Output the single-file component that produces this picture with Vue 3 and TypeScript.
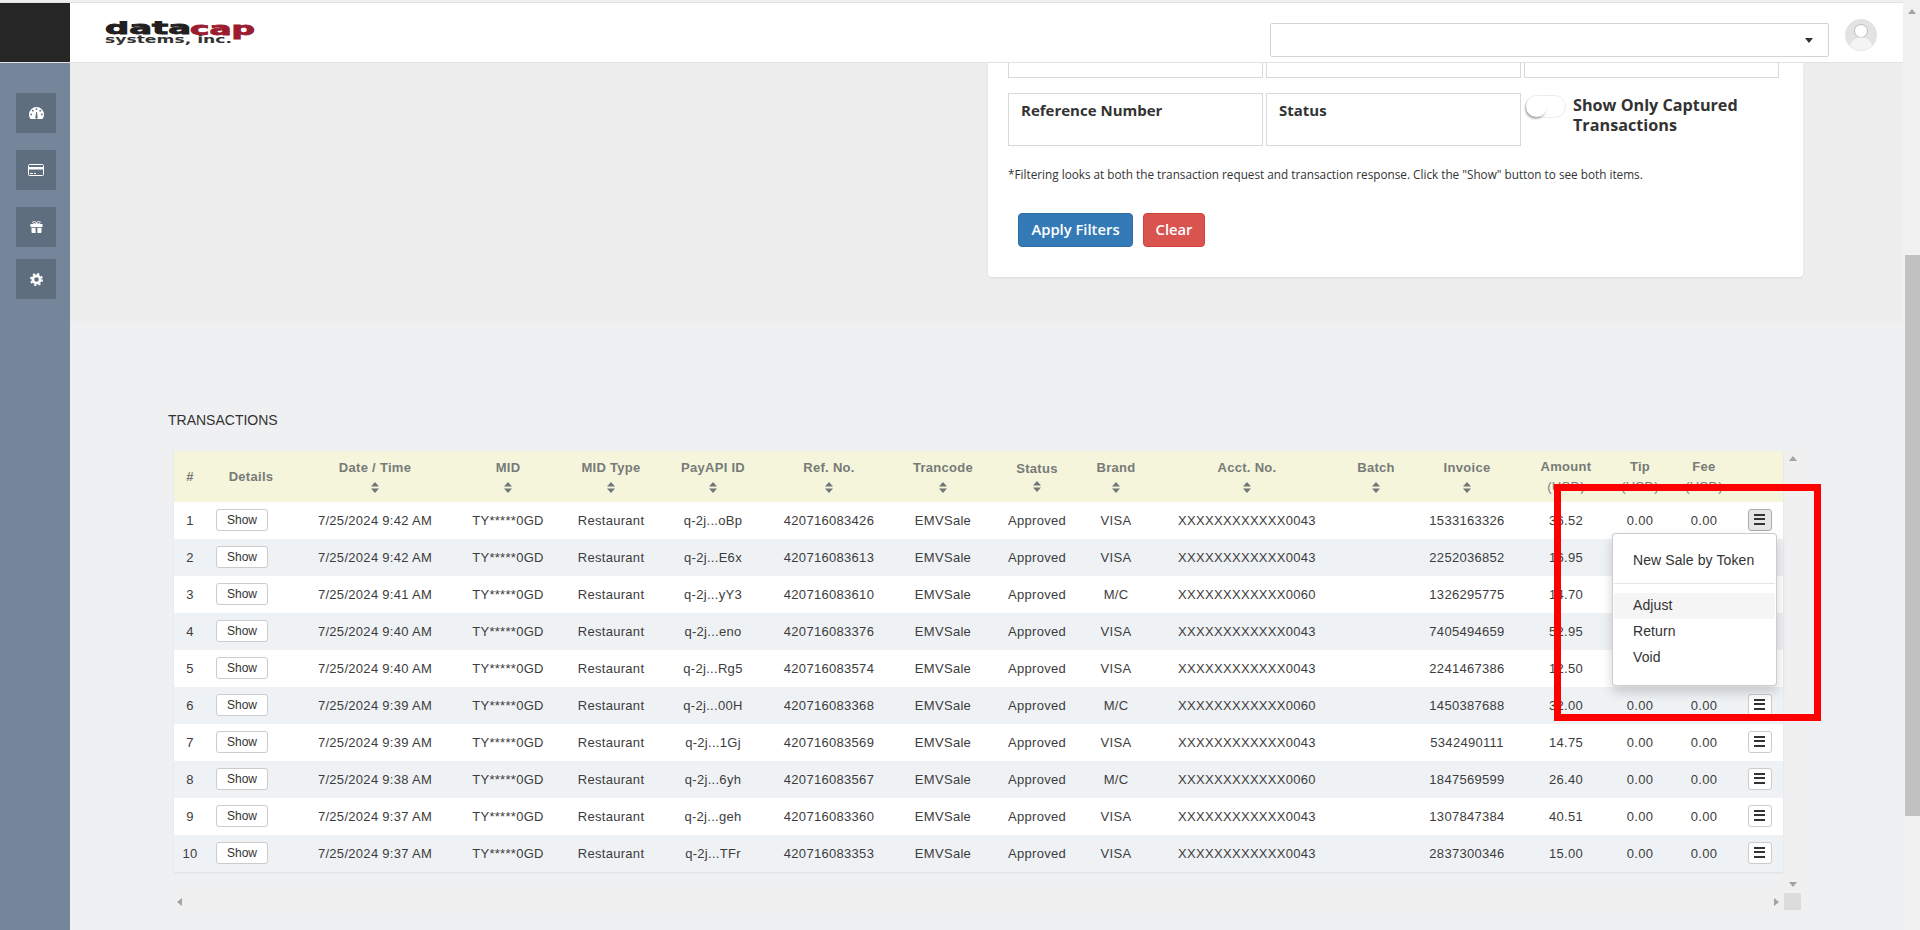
<template>
  <div class="page">
    <div class="page-main">
      <header class="topbar">
        <div class="brand-box"></div>
        <div class="topbar-body">
          <svg class="logo" width="160" height="30" viewBox="0 0 160 30" xmlns="http://www.w3.org/2000/svg">
            <text x="0" y="13" class="logo-big" fill="#231f20" stroke="#231f20" textLength="86" lengthAdjust="spacingAndGlyphs">data</text>
            <text x="85" y="14" class="logo-big" fill="#9c1c2f" stroke="#9c1c2f" textLength="65" lengthAdjust="spacingAndGlyphs">cap</text>
            <text x="0" y="22" class="logo-small" fill="#333" textLength="127" lengthAdjust="spacingAndGlyphs">systems, inc.</text>
          </svg>
          <div class="merchant-select"><span class="select-caret"></span></div>
          <svg class="avatar" width="32" height="32" viewBox="0 0 32 32" xmlns="http://www.w3.org/2000/svg">
            <circle cx="16" cy="16" r="16" fill="#e3e3e3" />
            <circle cx="16" cy="12" r="6.5" fill="#fff" stroke="#bdbdbd" stroke-width="1" />
            <path d="M5 27c1.5-6 6-8.5 11-8.5s9.500 2.500 11 8.500a16 16 0 0 1-22 0z" fill="#f4f4f4" />
          </svg>
        </div>
      </header>

      <div class="layout">
        <aside class="sidebar">
          <button class="side-btn">
            <svg width="15" height="12" viewBox="0 0 15 12" xmlns="http://www.w3.org/2000/svg">
              <path d="M7.500 0a7.500 7.500 0 0 1 7.500 7.500c0 1.500-.4 2.900-1.200 4.100-.1.200-.3.400-.6.400H1.800c-.3 0-.5-.2-.6-.4C.4 10.400 0 9 0 7.500A7.500 7.500 0 0 1 7.500 0z" fill="#fff" />
              <circle cx="7.500" cy="2.200" r=".9" fill="#5f6e7e" />
              <circle cx="3.800" cy="3.700" r=".9" fill="#5f6e7e" />
              <circle cx="11.200" cy="3.700" r=".9" fill="#5f6e7e" />
              <circle cx="2.200" cy="7.400" r=".9" fill="#5f6e7e" />
              <circle cx="12.800" cy="7.400" r=".9" fill="#5f6e7e" />
              <path d="M6.400 10l.8-5h.8l.6 5a1.200 1.200 0 1 1-2.200 0z" fill="#5f6e7e" />
            </svg>
          </button>
          <button class="side-btn">
            <svg width="16" height="12" viewBox="0 0 16 12" xmlns="http://www.w3.org/2000/svg">
              <rect x=".5" y=".5" width="15" height="11" rx="1" fill="none" stroke="#fff" />
              <rect x="1" y="3" width="14" height="2.500" fill="#fff" />
              <rect x="2" y="9" width="3" height="1" fill="#fff" />
              <rect x="6" y="9" width="2" height="1" fill="#fff" />
            </svg>
          </button>
          <button class="side-btn">
            <svg width="13" height="12" viewBox="0 0 13 12" xmlns="http://www.w3.org/2000/svg">
              <path d="M.5 3h12v3H.5zM1.500 6.800h4.100V12H2.500a1 1 0 0 1-1-1zM7.400 6.800h4.100V11a1 1 0 0 1-1 1H7.400z" fill="#fff" />
              <path d="M6.500 3C5 3 3 2.800 2.800 1.500 2.800.500 3.500 0 4.200 0c1.200 0 1.900 1.500 2.300 3zM6.500 3C8 3 10 2.800 10.200 1.500 10.200.500 9.500 0 8.800 0 7.600 0 6.900 1.500 6.500 3z" fill="none" stroke="#fff" stroke-width="1" />
            </svg>
          </button>
          <button class="side-btn">
            <svg width="13" height="13" viewBox="0 0 13 13" xmlns="http://www.w3.org/2000/svg">
              <circle cx="6.500" cy="6.500" r="3.700" fill="none" stroke="#fff" stroke-width="2.800" />
              <circle cx="6.500" cy="6.500" r="5.700" fill="none" stroke="#fff" stroke-width="1.600" stroke-dasharray="2.200 2.280" />
            </svg>
          </button>
        </aside>

        <main class="content">
          <section class="filter-band">
            <div class="filter-card">
              <div class="filter-grid">
                <div class="field cut"></div>
                <div class="field cut"></div>
                <div class="field cut"></div>
                <div class="field">Reference Number</div>
                <div class="field">Status</div>
                <div class="captured">
                  <span class="toggle"><span class="knob"></span></span>
                  <span class="captured-label">Show Only Captured Transactions</span>
                </div>
              </div>
              <p class="filter-note">*Filtering looks at both the transaction request and transaction response. Click the "Show" button to see both items.</p>
              <div class="filter-actions">
                <button class="btn btn-primary">Apply Filters</button>
                <button class="btn btn-danger">Clear</button>
              </div>
            </div>
          </section>

          <section class="transactions">
            <h2 class="section-title">TRANSACTIONS</h2>
            <div class="table-wrap">
              <table class="tx-table">
                <colgroup>
                  <col v-for="col in columns" :key="col.label" :style="{ width: col.width + 'px' }" />
                </colgroup>
                <thead>
                  <tr>
                    <th v-for="col in columns" :key="col.label">
                      <span v-if="col.label" class="th-label">{{ col.label }}</span>
                      <span v-if="col.unit" class="th-unit">(USD)</span>
                      <svg v-if="col.sort" class="sort" width="8" height="11" viewBox="0 0 8 11" xmlns="http://www.w3.org/2000/svg">
                        <path d="M4 0l4 4.500H0zM4 11L0 6.500h8z" fill="#6f7778" />
                      </svg>
                    </th>
                  </tr>
                </thead>
                <tbody>
                  <tr v-for="(row, i) in rows" :key="row.ref">
                    <td>{{ i + 1 }}</td>
                    <td class="details-cell"><button class="show-btn">Show</button></td>
                    <td>{{ row.time }}</td>
                    <td>TY*****0GD</td>
                    <td>Restaurant</td>
                    <td>{{ row.pay }}</td>
                    <td>{{ row.ref }}</td>
                    <td>EMVSale</td>
                    <td>Approved</td>
                    <td>{{ row.brand }}</td>
                    <td>{{ row.acct }}</td>
                    <td></td>
                    <td>{{ row.invoice }}</td>
                    <td>{{ row.amount }}</td>
                    <td>0.00</td>
                    <td>0.00</td>
                    <td class="menu-cell">
                      <button class="menu-btn" :class="{ active: i === 0 }">
                        <span></span><span></span><span></span>
                      </button>
                      <ul v-if="i === 0" class="menu">
                        <li>New Sale by Token</li>
                        <li class="divider"></li>
                        <li class="hover">Adjust</li>
                        <li>Return</li>
                        <li>Void</li>
                      </ul>
                    </td>
                  </tr>
                </tbody>
              </table>
              <div class="v-bar">
                <span class="tri up"></span>
                <span class="tri down"></span>
              </div>
              <div class="h-bar">
                <span class="tri left"></span>
                <span class="tri right"></span>
              </div>
              <div class="corner"></div>
            </div>
          </section>
        </main>
      </div>
    </div>

    <div class="page-scroll">
      <span class="tri up"></span>
      <div class="thumb"></div>
    </div>

    <div class="annotation"></div>
  </div>
</template>

<script setup lang="ts">
interface Column {
  label: string
  width: number
  sort?: boolean
  unit?: boolean
}

const columns: Column[] = [
  { label: '#', width: 32 },
  { label: 'Details', width: 90 },
  { label: 'Date / Time', width: 158, sort: true },
  { label: 'MID', width: 108, sort: true },
  { label: 'MID Type', width: 98, sort: true },
  { label: 'PayAPI ID', width: 106, sort: true },
  { label: 'Ref. No.', width: 126, sort: true },
  { label: 'Trancode', width: 102, sort: true },
  { label: 'Status', width: 86, sort: true },
  { label: 'Brand', width: 72, sort: true },
  { label: 'Acct. No.', width: 190, sort: true },
  { label: 'Batch', width: 68, sort: true },
  { label: 'Invoice', width: 114, sort: true },
  { label: 'Amount', width: 84, unit: true },
  { label: 'Tip', width: 64, unit: true },
  { label: 'Fee', width: 64, unit: true },
  { label: '', width: 47 }
]

const rows = [
  ['9:42', 'oBp', '426', 'VISA', '0043', '1533163326', '36.52'],
  ['9:42', 'E6x', '613', 'VISA', '0043', '2252036852', '16.95'],
  ['9:41', 'yY3', '610', 'M/C', '0060', '1326295775', '14.70'],
  ['9:40', 'eno', '376', 'VISA', '0043', '7405494659', '52.95'],
  ['9:40', 'Rg5', '574', 'VISA', '0043', '2241467386', '12.50'],
  ['9:39', '00H', '368', 'M/C', '0060', '1450387688', '32.00'],
  ['9:39', '1Gj', '569', 'VISA', '0043', '5342490111', '14.75'],
  ['9:38', '6yh', '567', 'M/C', '0060', '1847569599', '26.40'],
  ['9:37', 'geh', '360', 'VISA', '0043', '1307847384', '40.51'],
  ['9:37', 'TFr', '353', 'VISA', '0043', '2837300346', '15.00']
].map(([t, pay, ref, brand, acct, invoice, amount]) => ({
  time: `7/25/2024 ${t} AM`,
  pay: `q-2j...${pay}`,
  ref: `420716083${ref}`,
  brand,
  acct: `XXXXXXXXXXXX${acct}`,
  invoice,
  amount
}))
</script>

<style>
html,
body {
  margin: 0;
  overflow: hidden;
}
</style>

<style scoped>
.page {
  position: relative;
  display: flex;
  width: 1920px;
  height: 930px;
  overflow: hidden;
  background: #eef0f2;
  font-family: "Liberation Sans", Arial, sans-serif;
}

.page-main {
  display: flex;
  flex-direction: column;
  width: 1903px;
}

.topbar {
  display: flex;
  flex: none;
  height: 59px;
  margin-top: 2px;
  background: #fff;
  border-top: 1px solid #e2e2e2;
  border-bottom: 1px solid #e2e2e2;
}

.brand-box {
  width: 70px;
  background: #262626;
}

.topbar-body {
  display: flex;
  flex: 1;
  align-items: flex-start;
}

.logo {
  margin-left: 35px;
  margin-top: 18px;
}

.logo-big {
  font-family: "DejaVu Sans", sans-serif;
  font-weight: 700;
  font-size: 17px;
  stroke-width: 0.8px;
}

.logo-small {
  font-family: "DejaVu Sans", sans-serif;
  font-weight: 700;
  font-size: 10px;
}

.merchant-select {
  display: flex;
  align-items: center;
  justify-content: flex-end;
  box-sizing: border-box;
  width: 559px;
  height: 34px;
  margin-top: 20px;
  margin-left: auto;
  padding-right: 15px;
  background: #fff;
  border: 1px solid #d4d4d4;
  border-radius: 2px;
}

.select-caret {
  width: 0;
  height: 0;
  border-left: 4px solid transparent;
  border-right: 4px solid transparent;
  border-top: 5px solid #333;
}

.avatar {
  margin-left: 16px;
  margin-right: 26px;
  margin-top: 16px;
}

.layout {
  display: flex;
  flex: 1;
  min-height: 0;
}

.sidebar {
  display: flex;
  flex: none;
  flex-direction: column;
  box-sizing: border-box;
  width: 70px;
  padding: 30px 0 0 16px;
  background: #75859a;
}

.side-btn {
  display: flex;
  align-items: center;
  justify-content: center;
  width: 40px;
  height: 40px;
  margin-bottom: 17px;
  padding: 0;
  border: 0;
  background: #5f6e7e;
}

.side-btn:nth-child(3) {
  margin-bottom: 12px;
}

.content {
  flex: 1;
  min-width: 0;
}

.filter-band {
  height: 260px;
  background: #ededed;
}

.filter-card {
  box-sizing: border-box;
  width: 815px;
  height: 214px;
  margin-left: 918px;
  padding-left: 20px;
  background: #fff;
  border-radius: 0 0 4px 4px;
  box-shadow: 0 1px 2px rgba(0, 0, 0, 0.08);
  font-family: "Open Sans", "Liberation Sans", sans-serif;
  color: #333;
}

.filter-grid {
  display: grid;
  grid-template-columns: 258px 258px 255px;
  row-gap: 15px;
}

.field {
  box-sizing: border-box;
  width: 255px;
  height: 53px;
  padding: 6px 12px;
  border: 1px solid #d8d8d8;
  font-size: 15px;
  font-weight: 700;
}

.field.cut {
  height: 15px;
  padding: 0;
  border-top: 0;
}

.captured {
  display: flex;
  align-items: flex-start;
  padding: 2px 0 0 1px;
}

.toggle {
  display: flex;
  flex: none;
  box-sizing: border-box;
  width: 41px;
  height: 23px;
  background: #fff;
  border: 1px solid #ebebeb;
  border-radius: 12px;
}

.knob {
  width: 21px;
  height: 21px;
  background: #fff;
  border-radius: 50%;
  box-shadow: -1px 2px 2px rgba(0, 0, 0, 0.3);
}

.captured-label {
  width: 200px;
  margin-left: 7px;
  font-size: 16.200px;
  font-weight: 700;
  line-height: 20px;
}

.filter-note {
  margin: 20px 0 0;
  font-size: 11.750px;
  line-height: 16px;
  font-weight: 500;
}

.filter-actions {
  display: flex;
  gap: 10px;
  margin-top: 31px;
  padding-left: 10px;
}

.btn {
  height: 34px;
  padding: 0 0 2px;
  border: 1px solid;
  border-radius: 4px;
  color: #fff;
  font-family: inherit;
  font-size: 14.800px;
  font-weight: 600;
}

.btn-primary {
  width: 115px;
  background: #337ab7;
  border-color: #2e6da4;
}

.btn-danger {
  width: 62px;
  background: #d9534f;
  border-color: #d43f3a;
}

.transactions {
  padding: 88px 0 0 98px;
}

.section-title {
  margin: 0;
  font-size: 14px;
  line-height: 18px;
  font-weight: 400;
  color: #333;
}

.table-wrap {
  display: grid;
  grid-template-columns: 1610px 17px;
  grid-template-rows: 442px 17px;
  width: 1627px;
  margin-top: 22px;
  margin-left: 6px;
}

.tx-table {
  align-self: start;
  width: 1609px;
  table-layout: fixed;
  border-collapse: collapse;
  box-shadow: 0 1px 2px rgba(0, 0, 0, 0.08);
  font-size: 13px;
  color: #3c3c3c;
}

.tx-table th {
  height: 51px;
  padding: 0;
  background: #f5f5dc;
  color: #777b78;
  font-size: 13px;
  font-weight: 700;
  letter-spacing: 0.3px;
  text-align: center;
  vertical-align: middle;
}

.th-label,
.th-unit,
.sort {
  display: block;
  margin: 0 auto;
}

.th-unit {
  margin-top: 5px;
  font-weight: 400;
}

.sort {
  margin-top: 7px;
}

.tx-table th:nth-child(9) .sort {
  margin-top: 5px;
}

.tx-table td {
  height: 37px;
  padding: 0;
  letter-spacing: 0.3px;
  text-align: center;
  background: #fff;
}

.tx-table tbody tr:nth-child(even) td {
  background: #eff2f5;
}

.tx-table .details-cell {
  padding-left: 10px;
  text-align: left;
}

.show-btn {
  display: block;
  box-sizing: border-box;
  width: 52px;
  height: 22px;
  margin-top: -1px;
  padding: 0;
  background: #fff;
  border: 1px solid #ccc;
  border-radius: 3px;
  color: #333;
  font-family: inherit;
  font-size: 12px;
}

.menu-cell {
  position: relative;
}

.menu-btn {
  display: flex;
  flex-direction: column;
  align-items: center;
  justify-content: center;
  gap: 2.500px;
  box-sizing: border-box;
  width: 24px;
  height: 22px;
  margin: -1px auto 0;
  padding: 0 0 2px;
  background: #fff;
  border: 1px solid #ccc;
  border-radius: 3px;
}

.menu-btn span {
  width: 11px;
  height: 2px;
  background: #333;
}

.menu-btn.active {
  background: #e6e6e6;
  border-color: #adadad;
}

.menu {
  position: absolute;
  top: 31px;
  right: 6px;
  z-index: 2;
  box-sizing: border-box;
  width: 165px;
  height: 153px;
  margin: 0;
  padding: 14px 1px;
  list-style: none;
  background: #fff;
  border: 1px solid rgba(0, 0, 0, 0.2);
  border-radius: 4px;
  box-shadow: 0 6px 12px rgba(0, 0, 0, 0.175);
  font-size: 14px;
  line-height: 25px;
  letter-spacing: 0.1px;
  text-align: left;
  color: #333;
}

.menu li {
  padding: 0 0 1px 19px;
  border-radius: 3px;
}

.menu .divider {
  height: 1px;
  margin: 9px 0;
  padding: 0;
  background: #e5e5e5;
}

.menu .hover {
  background: #f5f5f5;
}

.v-bar {
  display: flex;
  flex-direction: column;
  align-items: center;
  justify-content: space-between;
  padding: 5px 0 6px;
  background: #f0f0f0;
}

.h-bar {
  display: flex;
  align-items: center;
  justify-content: space-between;
  padding: 0 5px 0 3px;
  background: #f0f0f0;
}

.corner {
  background: #dcdcdc;
}

.tri {
  display: block;
  width: 0;
  height: 0;
}

.tri.up {
  border-left: 4px solid transparent;
  border-right: 4px solid transparent;
  border-bottom: 5px solid #a3a3a3;
}

.tri.down {
  border-left: 4px solid transparent;
  border-right: 4px solid transparent;
  border-top: 5px solid #a3a3a3;
}

.tri.left {
  border-top: 4px solid transparent;
  border-bottom: 4px solid transparent;
  border-right: 5px solid #a3a3a3;
}

.tri.right {
  border-top: 4px solid transparent;
  border-bottom: 4px solid transparent;
  border-left: 5px solid #a3a3a3;
}

.page-scroll {
  display: flex;
  flex: none;
  flex-direction: column;
  align-items: flex-end;
  width: 17px;
  background: #f1f1f1;
}

.page-scroll .tri {
  margin: 9px 4px 0 0;
}

.thumb {
  width: 15px;
  height: 561px;
  margin-top: 241px;
  background: #c1c1c1;
}

.annotation {
  position: absolute;
  top: 484px;
  left: 1554px;
  z-index: 3;
  box-sizing: border-box;
  width: 267px;
  height: 237px;
  border: 7px solid #f00;
  pointer-events: none;
}
</style>
